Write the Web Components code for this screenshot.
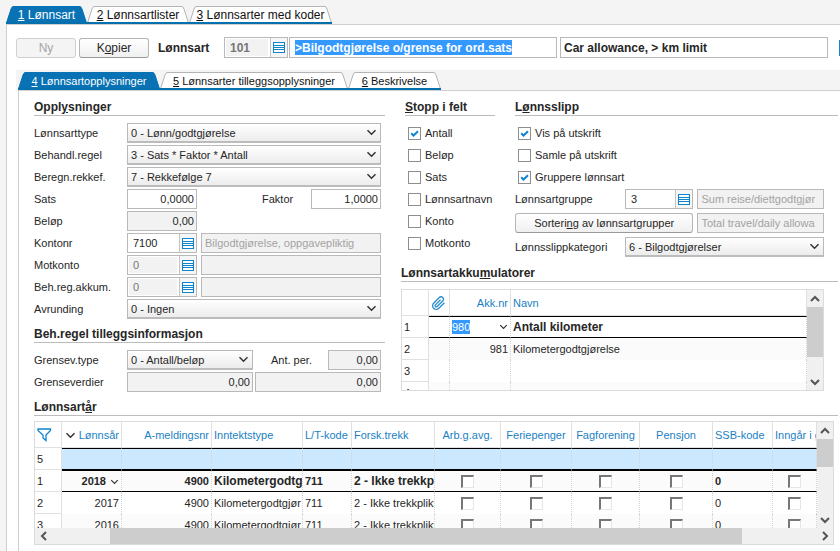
<!DOCTYPE html>
<html lang="no">
<head>
<meta charset="utf-8">
<title>Lønnsart</title>
<style>
html, body { margin: 0; min-height: 100%; background: #f4f4f4; }
body { font: 11px/14px "Liberation Sans", Arial, sans-serif; color: #262626; overflow: hidden; }
</style>
</head>
<body>
<wage-page></wage-page>
<script>
const CHEVRON = '<svg class="chev" width="11" height="7" viewBox="0 0 11 7" aria-hidden="true"><path d="M1.5 1.2 5.5 5.2 9.5 1.2" fill="none" stroke="#333" stroke-width="1.5"/></svg>';
const LIST = '<svg width="12" height="11" viewBox="0 0 12 11" aria-hidden="true" shape-rendering="crispEdges"><path d="M.5.5h11v10H.5zM1 3.5h10M1 5.5h10M1 7.5h10" fill="#fff" stroke="#0f84cf"/></svg>';
const BASE = '*{box-sizing:border-box}input,select,button{font:inherit;color:inherit;margin:0;border-radius:0}u{text-underline-offset:1px}';

const define = (name, render) => customElements.define(name, class extends HTMLElement {
  connectedCallback() {
    if (this.shadowRoot) return;
    const t = document.createElement('template');
    t.innerHTML = render(this);
    this.attachShadow({ mode: 'open' }).append(t.content.cloneNode(true));
  }
});

/* Tab with slanted sides */
define('ui-tab', el => {
  const on = el.hasAttribute('active');
  const fill = on ? '#0872b4' : '#fff', line = on ? '#0872b4' : '#b4b4b4';
  return `<style>${BASE}
:host{display:block;flex:0 0 var(--w)}
button{display:grid;grid-template-columns:7px 1fr 7px;width:100%;height:18px;padding:0;border:0;background:none;color:${on ? '#fff' : '#111'};white-space:nowrap}
svg{display:block}
span{background:${fill};border-top:1px solid ${line};border-bottom:2px solid #0670ad;line-height:16px;height:18px}
</style><button role="tab" aria-selected="${on}">
<svg width="7" height="18"><path d="M0 18 5 3Q6 .5 7 .5V18z" fill="${fill}"/><path d="M.5 17 5 3Q6 .5 7 .5" fill="none" stroke="${line}"/><path d="M0 17h7" stroke="#0670ad" stroke-width="2"/></svg>
<span><slot></slot></span>
<svg width="7" height="18"><path d="M7 18 2 3Q1 .5 0 .5V18z" fill="${fill}"/><path d="M6.500 17 2 3Q1 .5 0 .5" fill="none" stroke="${line}"/><path d="M0 17h7" stroke="#0670ad" stroke-width="2"/></svg>
</button>`;
});

define('ui-tabs', () => `<style>:host{display:block}div{display:flex}</style><div role="tablist"><slot></slot></div>`);

define('ui-button', el => `<style>${BASE}
:host{display:block}
button{width:100%;height:20px;padding:0;border:1px solid #b5b5b5;border-bottom-color:#9a9a9a;border-radius:3px;background:linear-gradient(#fff,#f0f0f0);white-space:nowrap}
button:disabled{color:#a5a5a5;border-color:#d0d0d0;background:#f4f4f4}
</style><button ${el.hasAttribute('disabled') ? 'disabled' : ''}><slot></slot></button>`);

/* Titled section with rule under its heading */
define('ui-section', () => `<style>
:host{display:block;min-width:0}
h2{margin:0;height:24px;box-sizing:border-box;padding-top:7px;border-bottom:1px solid #bcbcbc;font-size:12px;line-height:16px;font-weight:bold;white-space:nowrap}
.body{padding-top:var(--body-gap,7px)}
</style><h2><slot name="title"></slot></h2><div class="body"><slot></slot></div>`);

/* Labelled text box, lookup box or drop-down */
define('ui-field', el => {
  const a = n => el.getAttribute(n) || '', has = n => el.hasAttribute(n), kind = a('kind');
  const dis = has('disabled') ? 'readonly' : '';
  const name = a('label') ? '' : `aria-label="${a('name')}"`;
  let control;
  if (kind === 'select') control = `<div class="box select"><select id="c" ${name}><option>${a('value')}</option></select>${CHEVRON}</div>`;
  else control = `<div class="box ${kind}"><input id="c" ${name} value="${a('value')}" ${dis}>${kind === 'lookup' ? `<button aria-label="Søk">${LIST}</button>` : ''}</div>`;
  return `<style>${BASE}
:host{display:flex;align-items:center;min-width:0}
label{flex:0 0 var(--label,93px);white-space:nowrap}
.box{flex:1 1 0;min-width:0;display:flex;height:var(--h,20px);border:1px solid #b9b9b9;background:#fff;overflow:hidden}
input{flex:1 1 0;width:0;min-width:0;border:0;outline:0;background:none;padding:0 3px}
:host([num]) input{text-align:right;padding-right:2px}
:host([disabled]) .box{background:#f2f2f2}
:host([pale]) input{color:#a2a2a2}
:host([bold]) input{font-weight:bold;font-size:12px}
.lookup{background:#fff!important}
.lookup input{padding-left:5px}
:host([disabled]) .lookup input{background:#f2f2f2;color:#777;margin:1px 2px 1px 1px;padding-left:4px}
button{flex:0 0 17px;padding:0;border:0;border-left:1px solid #c4c4c4;background:#f6f6f6;display:grid;place-items:center}
svg{display:block}
:host([marked]) input{flex:0 0 auto;width:auto;field-sizing:content;background:#3399ff;color:#fff;margin:2px 0 2px 5px;padding:0}
.select{display:grid;background:linear-gradient(#fff,#ececec);border-bottom:2px solid #bcbcbc}
.select>*{grid-area:1/1}
select{appearance:none;border:0;outline:0;background:none;padding:0 18px 0 3px;width:100%;min-width:0}
.chev{align-self:center;justify-self:end;margin-right:3px;pointer-events:none}
</style>${a('label') ? `<label for="c">${a('label')}</label>` : ''}${control}`;
});

define('ui-check', el => `<style>${BASE}
:host{display:block}
label{display:flex;align-items:center;gap:4px;height:20px;padding-left:3px;white-space:nowrap}
.b{display:grid}.b>*{grid-area:1/1}
input{appearance:none;width:13px;height:13px;border:1px solid #8e8e8e;background:#fff}
svg{pointer-events:none;visibility:hidden}
input:checked+svg{visibility:visible}
</style><label><span class="b"><input type="checkbox" ${el.hasAttribute('checked') ? 'checked' : ''}><svg width="13" height="13"><path d="M3.200 6.300 5.500 8.500 10 4.200" fill="none" stroke="#0f84cf" stroke-width="2"/></svg></span><slot></slot></label>`);

/* Scroll bar: --lead, --thumb and --trail share out its track */
define('ui-scroll', el => {
  const h = el.hasAttribute('horizontal');
  const arrow = d => `<svg width="10" height="10" viewBox="0 0 10 10"><path d="${d}" fill="none" stroke="#555" stroke-width="2"/></svg>`;
  return `<style>
:host{display:flex;flex-direction:${h ? 'row' : 'column'};background:#f0f0f0;overflow:hidden}
span{flex:0 0 17px;display:grid;place-items:center}
i{flex:var(--lead,0) 1 0}b{flex:var(--thumb,1) 1 0;background:#cdcdcd}em{flex:var(--trail,1) 1 0}
</style><span>${arrow(h ? 'M7 1 3 5 7 9' : 'M1 7 5 3 9 7')}</span><i></i><b></b><em></em><span>${arrow(h ? 'M3 1 7 5 3 9' : 'M1 3 5 7 9 3')}</span>`;
});

const FUNNEL = '<svg width="15" height="14" viewBox="0 0 15 14" role="img" aria-label="Filter"><path d="M1 1h12.500v1.500L9 7v5.500L6 10V7L1 2.500z" fill="none" stroke="#0f84cf" stroke-width="1.300"/></svg>';
const CLIP = '<svg width="14" height="14" viewBox="1 0 23 23" role="img" aria-label="Vedlegg"><path d="M21.440 11.050l-9.190 9.190a6 6 0 0 1-8.490-8.490l9.190-9.190a4 4 0 0 1 5.660 5.660l-9.200 9.190a2 2 0 0 1-2.830-2.830l8.490-8.480" fill="none" stroke="#2a8fd0" stroke-width="2.200"/></svg>';
const BOX = { box: 1 };
const GRIDS = {
  acc: {
    cols: [['', 27], [CLIP, 21, 'c'], ['Akk.nr', 61, 'r'], ['Navn', 0, 't']],
    rows: [
      ['active', '1', '', `<span class="pick"><input class="mark" aria-label="Akk.nr" value="980">${CHEVRON}</span>`, 'Antall kilometer'],
      ['alt', '2', '', '981', 'Kilometergodtgjørelse'],
      ['', '3', '', '', ''],
      ['alt', '4', '', '', '']
    ]
  },
  year: {
    cols: [[FUNNEL, 27], [`${CHEVRON}Lønnsår`, 60, 'r'], ['A-meldingsnr', 90, 'r'], ['Inntektstype', 91, 't'], ['L/T-kode', 49], ['Forsk.trekk', 83, 't'],
      ['Arb.g.avg.', 66, 'c'], ['Feriepenger', 71, 'c'], ['Fagforening', 68, 'c'], ['Pensjon', 73, 'c'], ['SSB-kode', 60], ['Inngår i g', 0, 'k']],
    rows: [
      ['filter', '5', '', '', '', '', '', '', '', '', '', '', ''],
      ['active alt', '1', `2018${CHEVRON}`, '4900', 'Kilometergodtg', '711', '2 - Ikke trekkp', BOX, BOX, BOX, BOX, '0', BOX],
      ['', '2', '2017', '4900', 'Kilometergodtgjør', '711', '2 - Ikke trekkplikti', BOX, BOX, BOX, BOX, '0', BOX],
      ['alt', '3', '2016', '4900', 'Kilometergodtgjør', '711', '2 - Ikke trekkplikti', BOX, BOX, BOX, BOX, '0', BOX]
    ]
  }
};

define('ui-grid', el => {
  const g = GRIDS[el.getAttribute('data')];
  const cell = (v, i) => {
    const cls = g.cols[i][2] || '';
    if (i === 0) return `<th scope="row">${v}</th>`;
    return v.box ? `<td class="c"><input type="checkbox" aria-label="${g.cols[i][0]}"></td>` : `<td class="${cls}">${v}</td>`;
  };
  return `<style>${BASE}
:host{display:grid;grid-template-columns:minmax(0,1fr) 16px;border:1px solid #dcdcdc;background:#fff}
.view{height:var(--view);overflow:hidden}
table{width:100%;table-layout:fixed;border-collapse:separate;border-spacing:0}
th,td{height:22px;padding:0 2px;font-weight:normal;text-align:left;white-space:nowrap;overflow:hidden;border-right:1px dotted #d4d4d4;line-height:14px}
thead th{height:26px;color:#1b7fc3;border-right:1px solid #e0e0e0;border-bottom:1px solid #e0e0e0}
tbody th{border-right:1px solid #e0e0e0;border-bottom:1px solid #e0e0e0}
.r{text-align:right}.c{text-align:center}
.t,.k{padding-right:0}
tbody .k{text-align:center}
.alt td{background:#fbfbfb}
.active td{border-top:1px solid #000;border-bottom:1px solid #000;font-weight:bold}
.active .t{font-size:12px}
.filter td{background:#cce8ff;border-top:1px solid #000;border-bottom:1px solid #000}
svg{vertical-align:middle}
.chev{width:9px;height:6px}
td>.chev{margin-left:4px}
th .chev{width:11px;height:7px;margin-right:3px}
.pick{display:flex;align-items:center;justify-content:space-between;font-weight:normal}
.mark{field-sizing:content;border:0;outline:0;padding:0;height:14px;background:#3399ff;color:#fff}
input[type=checkbox]{appearance:none;display:block;margin:0 auto;width:13px;height:13px;background:#fff;border:2px solid #777;border-right:1px solid #e6e6e6;border-bottom:1px solid #e6e6e6}
</style><div class="view"><table><colgroup>${g.cols.map(c => `<col${c[1] ? ` style="width:${c[1]}px"` : ''}>`).join('')}</colgroup>
<thead><tr>${g.cols.map(c => `<th scope="col" class="${c[2] || ''}">${c[0]}</th>`).join('')}</tr></thead>
<tbody>${g.rows.map(([k, ...v]) => `<tr class="${k}">${v.map(cell).join('')}</tr>`).join('')}</tbody></table></div><slot></slot>`;
});

define('wage-page', () => `<style>${BASE}
:host{display:block;padding:6px 0 0 6px}
.outer{border:1px solid #cfcfcf;border-width:0 0 0 1px;background:#fff;box-shadow:inset 0 1px #cfcfcf;min-height:calc(100vh - 24px);padding:13px 0 0 9px}
.top{font-size:12px}
.bar{display:flex;align-items:center;height:21px;margin-bottom:12px}
.bar ui-button{margin-right:3px}
.bar .code{flex:0 0 130px;--label:66px;--h:21px;font-weight:bold;font-size:12px;margin-left:6px}
.bar .name{flex:1 1 0;--h:21px}
.edge{flex:0 0 1px;height:16px;margin-left:11px;background:#0f84cf}
.strip{background:#f4f4f4;padding:2px 0 0 2px}
.inner{margin-left:2px;border-left:1px solid #cfcfcf;border-top:1px solid #cfcfcf;padding:1px 2px 6px 15px;min-height:calc(100vh - 90px)}
.cols{display:grid;grid-template-columns:351fr 437fr;gap:16px}
.form{display:grid;gap:2px;padding-right:4px}
.row{display:flex;justify-content:space-between}
.pair{display:grid;grid-template-columns:219fr 126fr;gap:2px}
.w1{flex:0 0 163px}.w2{flex:0 0 119px;--label:49px}.w3{flex:0 0 180px}
.two{display:grid;grid-template-columns:90px minmax(0,1fr);gap:20px;padding-left:4px}
.slip{display:grid;gap:4px;padding:2px 14px 1px 0}
.slip .row{display:grid;grid-template-columns:179fr 127fr;gap:4px}
.slip ui-field[label]{--label:110px}
.acc{margin-right:14px;--view:100px}
.year{margin-right:4px;--view:106px}
.year ui-scroll[horizontal]{grid-column:1/3;height:16px}
</style>
<ui-tabs class="top">
<ui-tab active style="--w:81px"><u>1</u> Lønnsart</ui-tab><ui-tab style="--w:102px"><u>2</u> Lønnsartlister</ui-tab><ui-tab style="--w:143px"><u>3</u> Lønnsarter med koder</ui-tab>
</ui-tabs>
<main class="outer">
<div class="bar">
<ui-button disabled style="flex:0 0 60px;font-size:12px">Ny</ui-button><ui-button style="flex:0 0 70px;font-size:12px">K<u>o</u>pier</ui-button>
<ui-field class="code" kind="lookup" label="Lønnsart" value="101" disabled bold></ui-field>
<ui-field class="name" name="Navn" value="&gt;Bilgodtgjørelse o/grense for ord.sats" bold marked style="margin:0 3px 0 1px"></ui-field>
<ui-field class="name" name="Engelsk navn" value="Car allowance, &gt; km limit" bold></ui-field>
<span class="edge"></span>
</div>
<div class="strip"><ui-tabs>
<ui-tab active style="--w:142px"><u>4</u> Lønnsartopplysninger</ui-tab><ui-tab style="--w:188px"><u>5</u> Lønnsarter tilleggsopplysninger</ui-tab><ui-tab style="--w:93px"><u>6</u> Beskrivelse</ui-tab>
</ui-tabs></div>
<div class="inner">
<div class="cols">
<div>
<ui-section><span slot="title">Oppl<u>y</u>sninger</span>
<div class="form">
<ui-field kind="select" label="Lønnsarttype" value="0 - Lønn/godtgjørelse"></ui-field>
<ui-field kind="select" label="Behandl.regel" value="3 - Sats * Faktor * Antall"></ui-field>
<ui-field kind="select" label="Beregn.rekkef." value="7 - Rekkefølge 7"></ui-field>
<div class="row"><ui-field class="w1" num label="Sats" value="0,0000"></ui-field><ui-field class="w2" num label="Faktor" value="1,0000"></ui-field></div>
<div class="row"><ui-field class="w1" num disabled label="Beløp" value="0,00"></ui-field></div>
<div class="row"><ui-field class="w1" kind="lookup" label="Kontonr" value="7100"></ui-field><ui-field class="w3" disabled pale name="Kontonavn" value="Bilgodtgjørelse, oppgavepliktig"></ui-field></div>
<div class="row"><ui-field class="w1" kind="lookup" disabled label="Motkonto" value="0"></ui-field><ui-field class="w3" disabled pale name="Motkontonavn"></ui-field></div>
<div class="row"><ui-field class="w1" kind="lookup" disabled label="Beh.reg.akkum." value="0"></ui-field><ui-field class="w3" disabled pale name="Akkumulatornavn"></ui-field></div>
<ui-field kind="select" label="Avrunding" value="0 - Ingen"></ui-field>
</div></ui-section>
<ui-section><span slot="title">Beh.re<u>g</u>el tilleggsinformasjon</span>
<div class="form">
<div class="row"><ui-field kind="select" label="Grensev.type" value="0 - Antall/beløp" style="flex:0 0 219px"></ui-field><ui-field num disabled label="Ant. per." value="0,00" style="flex:0 0 110px;--label:57px"></ui-field></div>
<div class="pair"><ui-field num disabled label="Grenseverdier" value="0,00"></ui-field><ui-field num disabled name="Øvre grense" value="0,00"></ui-field></div>
</div></ui-section>
</div>
<div>
<div class="two">
<ui-section><span slot="title"><u>S</u>topp i felt</span>
<div class="form"><ui-check checked>Antall</ui-check><ui-check>Beløp</ui-check><ui-check>Sats</ui-check><ui-check>Lønnsartnavn</ui-check><ui-check>Konto</ui-check><ui-check>Motkonto</ui-check></div></ui-section>
<ui-section><span slot="title">L<u>ø</u>nnsslipp</span>
<div class="form"><ui-check checked>Vis på utskrift</ui-check><ui-check>Samle på utskrift</ui-check><ui-check checked>Gruppere lønnsart</ui-check></div>
<div class="slip">
<div class="row"><ui-field kind="lookup" label="Lønnsartgruppe" value="3"></ui-field><ui-field disabled pale name="Gruppenavn" value="Sum reise/diettgodtgjør"></ui-field></div>
<div class="row"><ui-button>Sorteri<u>n</u>g av lønnsartgrupper</ui-button><ui-field disabled pale name="Engelsk gruppenavn" value="Total travel/daily allowa"></ui-field></div>
<ui-field kind="select" label="Lønnsslippkategori" value="6 - Bilgodtgjørelser"></ui-field>
</div></ui-section>
</div>
<ui-section><span slot="title">Lønnsartakku<u>m</u>ulatorer</span>
<ui-grid class="acc" data="acc"><ui-scroll style="--thumb:50;--trail:16"></ui-scroll></ui-grid></ui-section>
</div>
</div>
<ui-section style="--body-gap:5px"><span slot="title">Lønnsart<u>å</u>r</span>
<ui-grid class="year" data="year"><ui-scroll style="--thumb:28;--trail:44"></ui-scroll><ui-scroll horizontal style="--lead:58;--thumb:632;--trail:74"></ui-scroll></ui-grid></ui-section>
</div>
</main>`);
</script>
</body>
</html>
